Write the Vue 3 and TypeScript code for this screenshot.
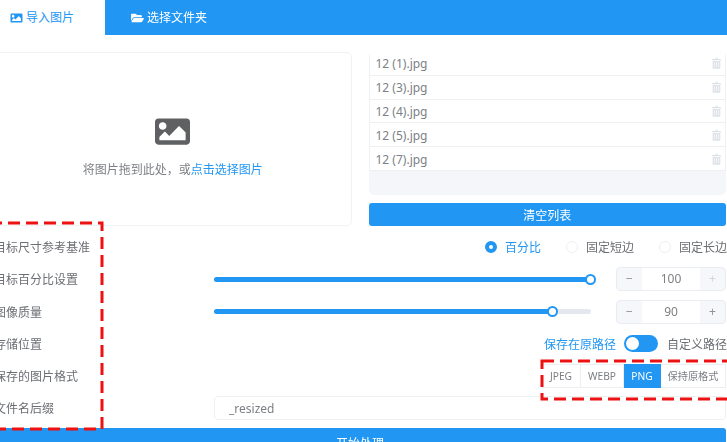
<template>
  <div class="page">
    <div class="shell">
      <!-- Tabs -->
      <div class="tabs">
        <div class="tab active">
          <svg class="tab-icon" viewBox="0 0 512 512"><path :d="imagePath" /></svg>
          导入图片
        </div>
        <div class="tab">
          <svg class="tab-icon" viewBox="0 0 576 512"><path :d="folderPath" /></svg>
          选择文件夹
        </div>
      </div>

      <div class="content">
        <div class="import-grid">
          <div class="upload-box">
            <svg class="upload-icon" viewBox="0 0 512 512"><path :d="imagePath" /></svg>
            <p class="upload-text">将图片拖到此处，或<span class="link">点击选择图片</span></p>
          </div>
          <div class="file-col">
            <ul class="file-list">
              <li v-for="file in files" :key="file" class="file-item">
                <span>{{ file }}</span>
                <svg class="trash" viewBox="0 0 448 512"><path :d="trashPath" /></svg>
              </li>
            </ul>
            <button class="clear-button">清空列表</button>
          </div>
        </div>

        <div class="form">
          <div class="form-row">
            <label class="form-label">目标尺寸参考基准</label>
            <div class="control radios">
              <span v-for="(opt, i) in radioOptions" :key="opt" class="radio" :class="{ checked: i === 0 }">
                <i class="radio-dot"></i>{{ opt }}
              </span>
            </div>
          </div>

          <div v-for="s in sliders" :key="s.label" class="form-row">
            <label class="form-label">{{ s.label }}</label>
            <div class="control slider-row">
              <div class="slider">
                <div class="slider-fill" :style="{ width: s.percent + '%' }">
                  <i class="slider-thumb"></i>
                </div>
              </div>
              <div class="number">
                <span class="step">−</span>
                <span class="value">{{ s.value }}</span>
                <span class="step" :class="{ faded: s.value === 100 }">+</span>
              </div>
            </div>
          </div>

          <div class="form-row">
            <label class="form-label">存储位置</label>
            <div class="control switch-row">
              <span class="link">保存在原路径</span>
              <i class="switch"><i class="switch-knob"></i></i>
              <span>自定义路径</span>
            </div>
          </div>

          <div class="form-row">
            <label class="form-label">保存的图片格式</label>
            <div class="control formats">
              <span v-for="f in formats" :key="f" class="format" :class="{ selected: f === 'PNG' }">{{ f }}</span>
            </div>
          </div>

          <div class="form-row">
            <label class="form-label">文件名后缀</label>
            <div class="control">
              <input class="suffix" value="_resized" />
            </div>
          </div>
        </div>

        <button class="start-button">开始处理</button>
      </div>
    </div>

    <!-- Annotations -->
    <svg class="annotations" width="727" height="442">
      <rect x="-10" y="223" width="112" height="206" />
      <rect x="542" y="361" width="200" height="38" />
    </svg>
  </div>
</template>

<script setup lang="ts">
const imagePath =
  'M464 448H48c-26.51 0-48-21.49-48-48V112c0-26.51 21.49-48 48-48h416c26.51 0 48 21.49 48 48v288c0 26.51-21.49 48-48 48zM112 120c-30.928 0-56 25.072-56 56s25.072 56 56 56 56-25.072 56-56-25.072-56-56-56zM64 384h384V272l-87.515-87.515c-4.686-4.686-12.284-4.686-16.971 0L208 320l-55.515-55.515c-4.686-4.686-12.284-4.686-16.971 0L64 336v48z'
const folderPath =
  'M572.694 292.093L500.27 416.248A63.997 63.997 0 0 1 444.989 448H45.025c-18.523 0-30.064-20.093-20.731-36.093l72.424-124.155A64 64 0 0 1 152 256h399.964c18.523 0 30.064 20.093 20.73 36.093zM152 224h328v-48c0-26.51-21.49-48-48-48H272l-64-64H48C21.49 64 0 85.49 0 112v278.046l69.077-118.418C86.214 242.25 117.989 224 152 224z'
const trashPath =
  'M32 464a48 48 0 0 0 48 48h288a48 48 0 0 0 48-48V128H32zm272-256a16 16 0 0 1 32 0v224a16 16 0 0 1-32 0zm-96 0a16 16 0 0 1 32 0v224a16 16 0 0 1-32 0zm-96 0a16 16 0 0 1 32 0v224a16 16 0 0 1-32 0zM432 32H312l-9.4-18.7A24 24 0 0 0 281.1 0H166.8a23.72 23.72 0 0 0-21.4 13.3L136 32H16A16 16 0 0 0 0 48v32a16 16 0 0 0 16 16h416a16 16 0 0 0 16-16V48a16 16 0 0 0-16-16z'

const files = ['12 (1).jpg', '12 (3).jpg', '12 (4).jpg', '12 (5).jpg', '12 (7).jpg']
const radioOptions = ['百分比', '固定短边', '固定长边']
const sliders = [
  { label: '目标百分比设置', percent: 100, value: 100 },
  { label: '图像质量', percent: 90, value: 90 }
]
const formats = ['JPEG', 'WEBP', 'PNG', '保持原格式']
</script>

<style>
html,
body {
  overflow: hidden;
  background: #fff;
}
</style>

<style scoped>
.page {
  position: relative;
  width: 727px;
  height: 442px;
  overflow: hidden;
  font-family: "Noto Sans", "Noto Sans CJK SC", sans-serif;
  font-size: 12px;
  color: #6b6e73;
  filter: blur(0.5px);
}

.shell {
  width: 743px;
  margin-left: -16px;
}

.tabs {
  display: flex;
  height: 35px;
  background: #2196f3;
}

.tab {
  display: flex;
  align-items: center;
  gap: 3px;
  padding: 0 26px;
  color: #fff;
  line-height: 30px;
}

.tab.active {
  padding-right: 31px;
  background: #fff;
  color: #2196f3;
}

.tab-icon {
  width: 13px;
  height: 12px;
  fill: currentColor;
}

.content {
  padding: 17px 1px 0 10px;
}

.import-grid {
  display: grid;
  grid-template-columns: 1fr 1fr;
  gap: 17px;
  height: 174px;
}

.upload-box {
  display: flex;
  flex-direction: column;
  align-items: center;
  border: 1px solid #f0f2f5;
  border-radius: 5px;
}

.upload-icon {
  width: 35px;
  height: 35px;
  margin-top: 61px;
  fill: #5f6062;
}

.upload-text {
  margin: 12px 0 0;
  line-height: 18px;
  color: #7c7f84;
}

.link {
  color: #2196f3;
}

.file-col {
  display: flex;
  flex-direction: column;
  gap: 8px;
}

.file-list {
  flex: 1;
  margin: 0;
  padding: 0;
  list-style: none;
  background: #f4f6f9;
  border-radius: 5px;
  overflow: hidden;
}

.file-item {
  display: flex;
  align-items: center;
  justify-content: space-between;
  height: 23.8px;
  box-sizing: border-box;
  padding: 1px 4px 0 6px;
  background: #fff;
  border: 1px solid #eef0f3;
  border-top: 0;
  color: #7c7f84;
}

.trash {
  width: 9px;
  height: 11px;
  fill: #dfe2e6;
}

.clear-button,
.start-button {
  display: block;
  width: 100%;
  border: 0;
  border-radius: 3px;
  background: #2196f3;
  color: #fff;
  font: inherit;
}

.clear-button {
  height: 23px;
}

.form {
  display: flex;
  flex-direction: column;
  gap: 8.3px;
  margin-top: 9px;
}

.form-row {
  display: flex;
  align-items: center;
  height: 24px;
}

.form-label {
  flex: none;
  width: 220px;
}

.control {
  flex: 1;
  display: flex;
  align-items: center;
  justify-content: flex-end;
  min-width: 0;
}

.radios {
  gap: 25px;
  margin-right: -1px;
}

.radio {
  display: flex;
  align-items: center;
  gap: 8px;
}

.radio.checked {
  color: #2196f3;
}

.radio-dot {
  width: 12px;
  height: 12px;
  box-sizing: border-box;
  border: 1px solid #eceef1;
  border-radius: 50%;
  background: #fff;
}

.radio.checked .radio-dot {
  border: 4px solid #2196f3;
}

.slider-row {
  gap: 25px;
}

.slider {
  flex: 1;
  height: 5px;
  border-radius: 3px;
  background: #e4e7ed;
}

.slider-fill {
  position: relative;
  height: 100%;
  border-radius: 3px;
  background: #2196f3;
}

.slider-thumb {
  position: absolute;
  top: -3px;
  right: -5px;
  width: 11px;
  height: 11px;
  box-sizing: border-box;
  border: 2px solid #2196f3;
  border-radius: 50%;
  background: #fff;
}

.number {
  flex: none;
  display: flex;
  width: 110px;
  height: 24px;
  box-sizing: border-box;
  border: 1px solid #e9ecf0;
  border-radius: 4px;
  background: #f5f7fa;
}

.step {
  width: 25px;
  text-align: center;
  line-height: 22px;
  color: #8e9196;
}

.step.faded {
  color: #d4d6da;
}

.value {
  flex: 1;
  background: #fff;
  text-align: center;
  line-height: 22px;
  color: #7c7f84;
}

.switch-row {
  gap: 8.5px;
  margin-right: -1px;
}

.switch {
  position: relative;
  width: 34px;
  height: 17px;
  border-radius: 9px;
  background: #2196f3;
}

.switch-knob {
  position: absolute;
  top: 2px;
  left: 2px;
  width: 13px;
  height: 13px;
  border-radius: 50%;
  background: #fff;
}

.formats {
  display: grid;
  grid-template-columns: 39px 43px 37px 65px;
  justify-content: end;
}

.format {
  height: 24px;
  box-sizing: border-box;
  border: 1px solid #eceef1;
  border-left: 0;
  text-align: center;
  line-height: 22px;
  font-size: 10.2px;
  color: #7c7f84;
}

.format.selected {
  background: #2196f3;
  border-color: #2196f3;
  color: #fff;
}

.suffix {
  width: 100%;
  height: 24px;
  box-sizing: border-box;
  padding: 0 14px;
  border: 1px solid #eef0f3;
  border-radius: 4px;
  font: inherit;
  color: #7c7f84;
  outline: none;
}

.start-button {
  height: 30px;
  margin-top: 8px;
}

.annotations {
  position: absolute;
  top: 0;
  left: 0;
  pointer-events: none;
}

.annotations rect {
  fill: none;
  stroke: #ee1111;
  stroke-width: 3;
  stroke-dasharray: 12 6;
}
</style>
